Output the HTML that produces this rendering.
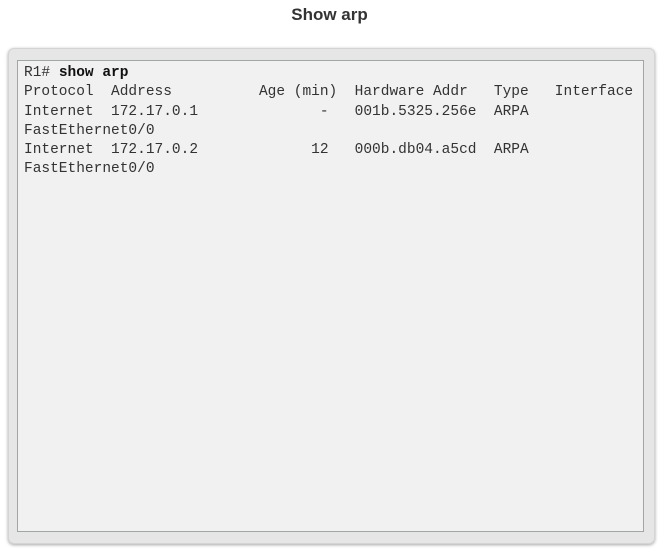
<!DOCTYPE html>
<html><head><style>
body{margin:0;width:659px;height:549px;background:#fff;overflow:hidden;position:relative;font-family:"Liberation Sans",sans-serif}
.t{position:absolute;top:5px;left:0;width:659px;text-align:center;font-weight:bold;font-size:17px;color:#333}
.o{position:absolute;left:8px;top:48px;width:647px;height:496px;background:#e6e6e6;border-radius:6px;box-shadow:0 1px 3px rgba(0,0,0,.35);border:1px solid #d4d4d4;box-sizing:border-box}
.i{position:absolute;left:17px;top:60px;width:627px;height:472px;background:#f1f1f1;border:1px solid #9fa6a4;box-sizing:border-box}
pre{position:absolute;left:24px;top:64px;margin:0;font-family:"Liberation Mono",monospace;font-size:14.5px;line-height:19.3px;color:#333}
pre b{color:#111}
</style></head><body>
<div class="t">Show arp</div>
<div class="o"></div>
<div class="i"></div>
<pre>R1# <b>show arp</b>
Protocol  Address          Age (min)  Hardware Addr   Type   Interface
Internet  172.17.0.1              -   001b.5325.256e  ARPA
FastEthernet0/0
Internet  172.17.0.2             12   000b.db04.a5cd  ARPA
FastEthernet0/0</pre>
</body></html>
